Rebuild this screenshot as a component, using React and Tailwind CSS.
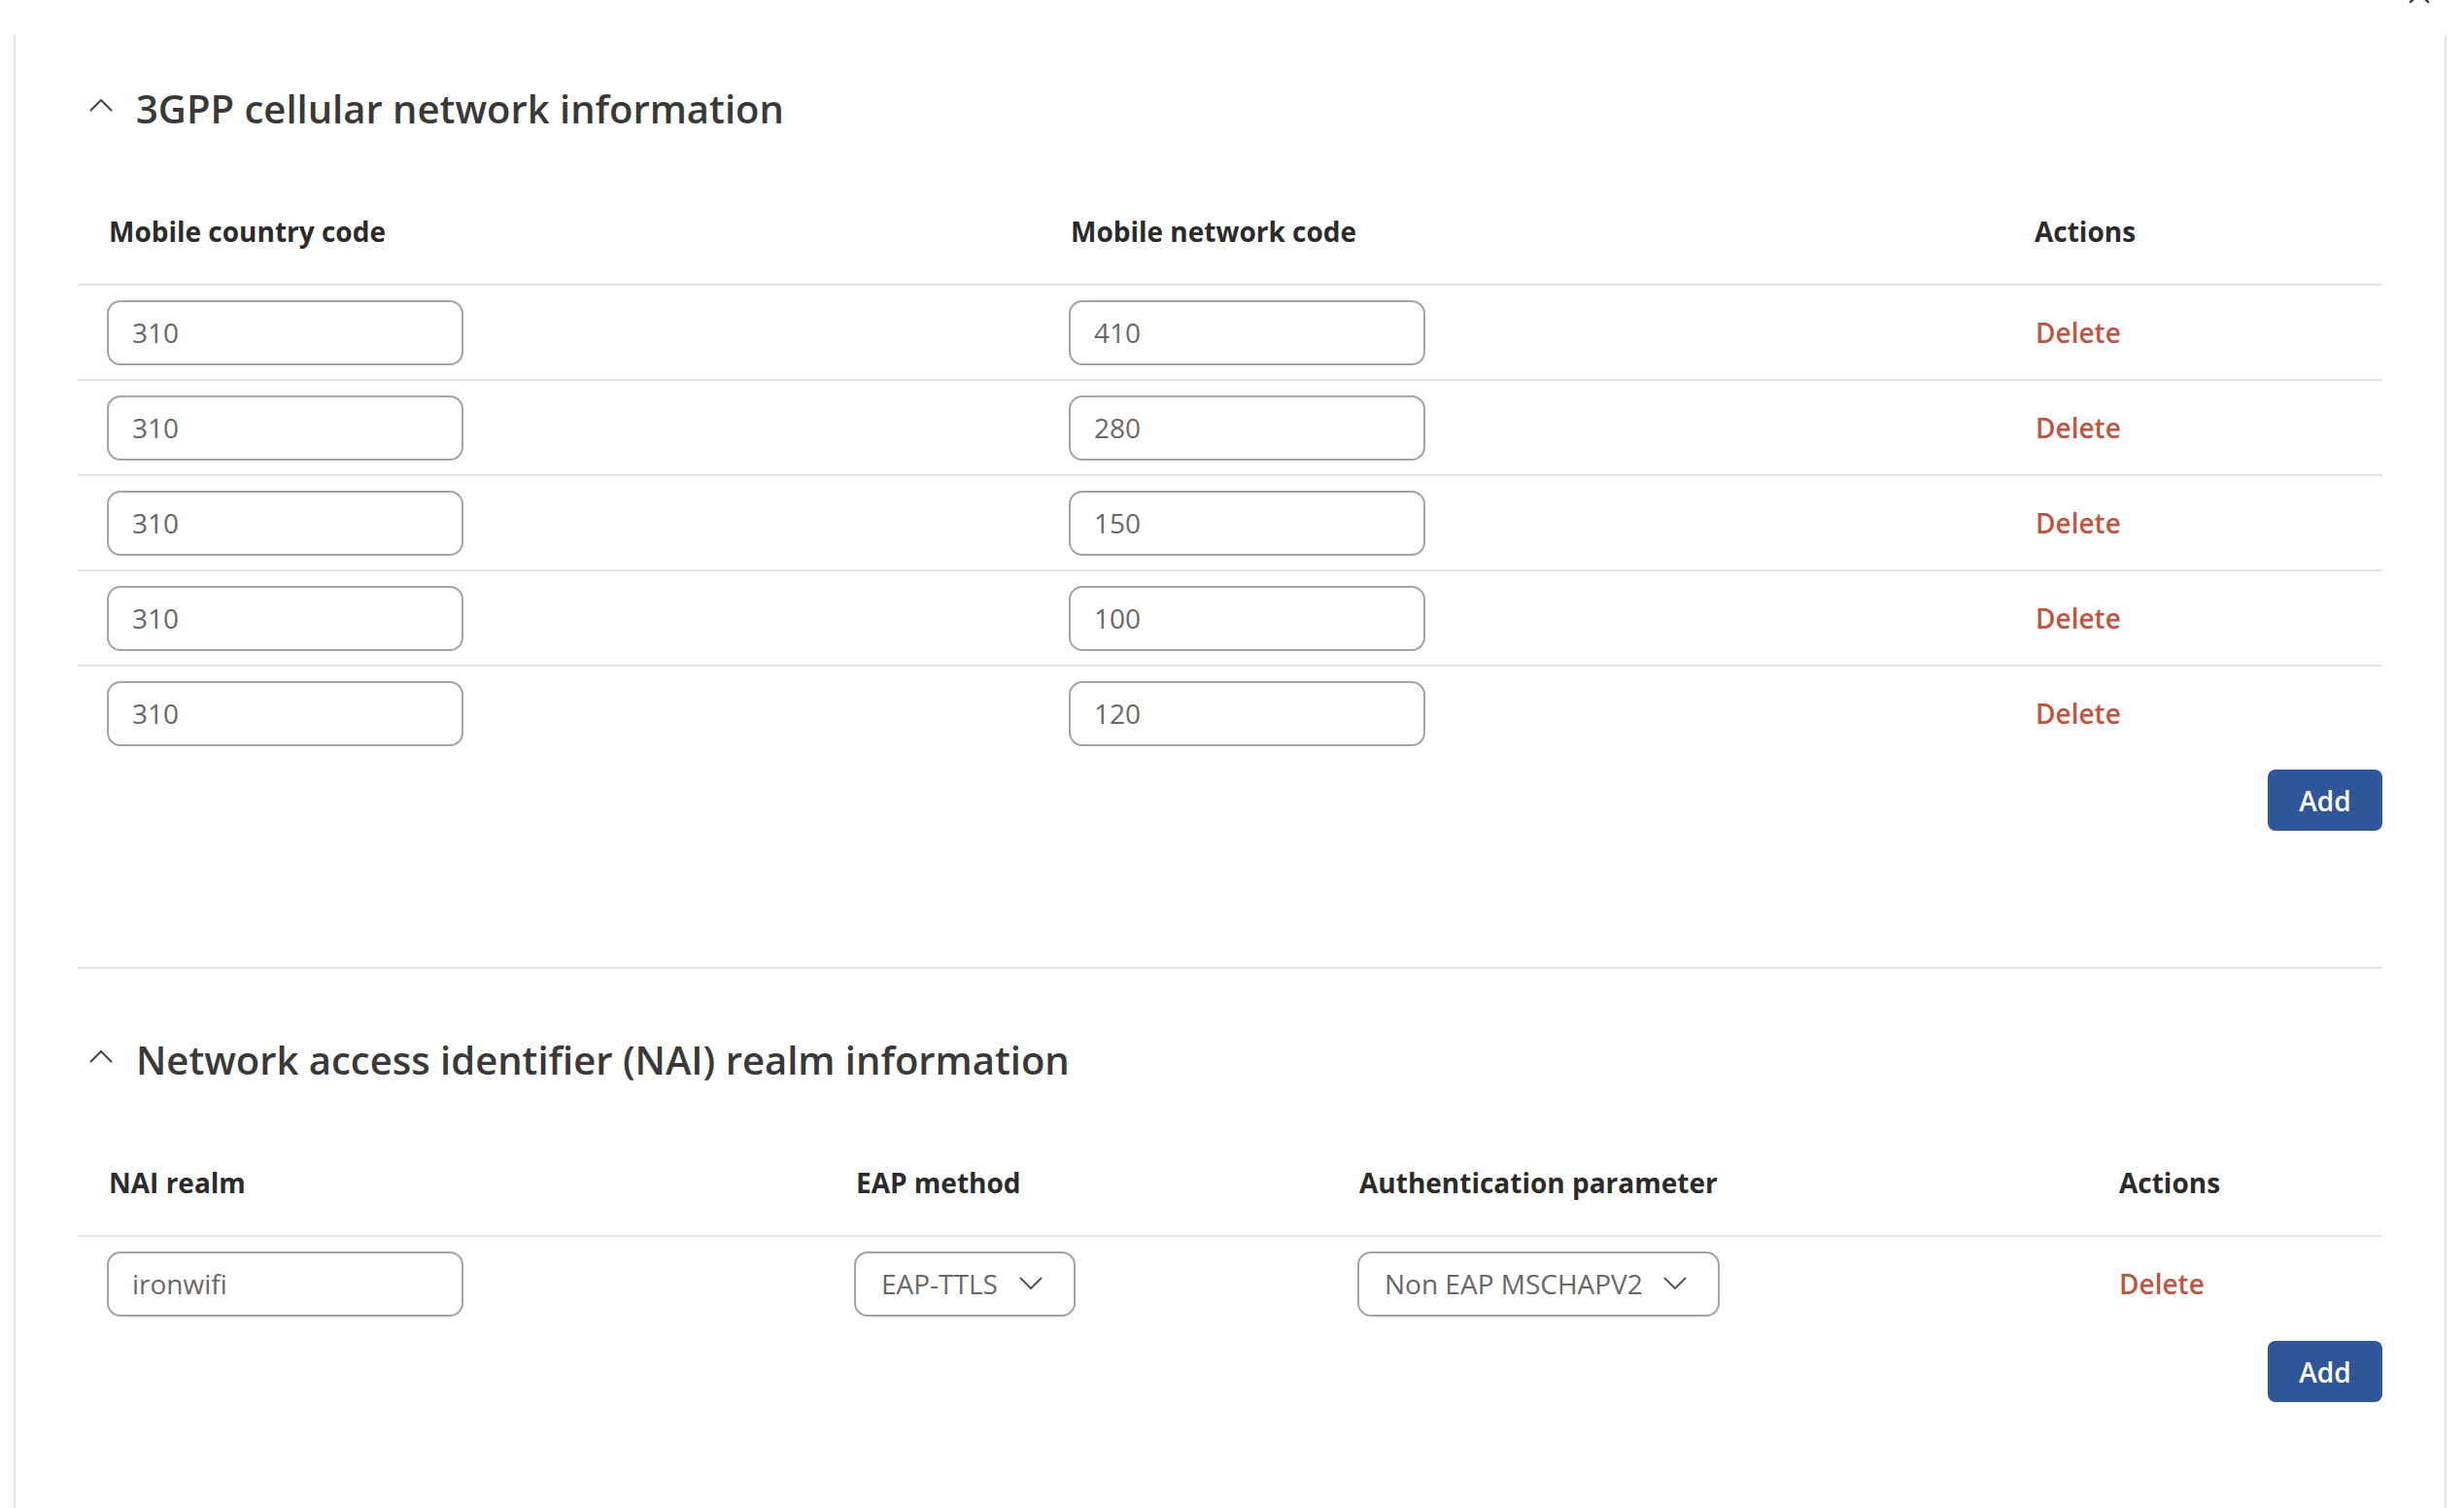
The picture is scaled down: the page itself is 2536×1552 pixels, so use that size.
import React from 'react';

const ChevronUp = ({ className }) => (
    <svg className={className} width="24" height="14" viewBox="0 0 24 14" fill="none" stroke="currentColor" strokeWidth="2" strokeLinecap="round" strokeLinejoin="round">
        <path d="M1.5 12.5 L12 2 L22.5 12.5" />
    </svg>
);

const ChevronDown = ({ className }) => (
    <svg className={className} width="24" height="14" viewBox="0 0 24 14" fill="none" stroke="currentColor" strokeWidth="2" strokeLinecap="round" strokeLinejoin="round">
        <path d="M1.5 1.5 L12 12 L22.5 1.5" />
    </svg>
);

const TextBox = ({ value }) => (
    <input
        readOnly
        value={value}
        className="w-[367px] h-[67px] rounded-[14px] border-2 border-[#a3a3a8] bg-white pl-[24px] text-[28px] text-[#686868] outline-none"
    />
);

const SelectBox = ({ value, width }) => (
    <div className={`flex items-center justify-between h-[67px] rounded-[14px] border-2 border-[#a3a3a8] bg-white pl-[26px] pr-[32px] text-[28px] text-[#686868] ${width}`}>
        <span>{value}</span>
        <ChevronDown className="text-[#555]" />
    </div>
);

const SectionTitle = ({ children }) => (
    <div className="flex items-start h-[48px]">
        <ChevronUp className="ml-[12px] mt-[13px] text-[#444]" />
        <h2 className="ml-[24px] text-[40px] leading-[48px] font-semibold text-[#393939]">{children}</h2>
    </div>
);

const DeleteLink = () => (
    <span className="text-[28px] font-semibold text-[#c2543f] cursor-pointer">Delete</span>
);

const AddButton = ({ className }) => (
    <div className={`flex justify-end ${className}`}>
        <button className="w-[118px] h-[63px] rounded-[8px] bg-[#2f5699] text-white text-[28px] font-semibold">
            Add
        </button>
    </div>
);

const App = () => {
    const plmns = [
        { mcc: "310", mnc: "410" },
        { mcc: "310", mnc: "280" },
        { mcc: "310", mnc: "150" },
        { mcc: "310", mnc: "100" },
        { mcc: "310", mnc: "120" },
    ];

    const realms = [
        { realm: "ironwifi", eap: "EAP-TTLS", auth: "Non EAP MSCHAPV2" },
    ];

    return (
        <div
            className="relative w-full h-[1552px] bg-white overflow-hidden text-[#333]"
            style={{ fontFamily: '"Open Sans", "Noto Sans", sans-serif' }}
        >
            {/* close icon, cut off at the top */}
            <svg className="absolute left-[2478px] top-[-19px] text-[#444]" width="24" height="24" viewBox="0 0 24 24" fill="none" stroke="currentColor" strokeWidth="2.5" strokeLinecap="round">
                <path d="M3 3 L21 21 M21 3 L3 21" />
            </svg>

            <div className="ml-[14px] mt-[36px] w-[2504px] h-[1516px] border-x-2 border-[#e4e4e6] px-[64px] pt-[52px]">

                {/* 3GPP */}
                <SectionTitle>3GPP cellular network information</SectionTitle>

                <div className="mt-[82px]">
                    <div className="grid grid-cols-[990px_992px_390px] border-b-2 border-[#e2e6ea] pb-[34px] text-[28px] leading-[40px] font-bold text-[#2b2b2b]">
                        <div className="pl-[32px]">Mobile country code</div>
                        <div className="pl-[32px]">Mobile network code</div>
                        <div className="pl-[32px]">Actions</div>
                    </div>

                    {plmns.map((row, i) => (
                        <div
                            key={i}
                            className={`grid grid-cols-[990px_992px_390px] items-center ${i > 0 ? 'h-[98px] border-t-2 border-[#e2e6ea]' : 'h-[96px]'}`}
                        >
                            <div className="pl-[30px]"><TextBox value={row.mcc} /></div>
                            <div className="pl-[30px]"><TextBox value={row.mnc} /></div>
                            <div className="pl-[33px]"><DeleteLink /></div>
                        </div>
                    ))}

                    <AddButton className="mt-[10px]" />
                </div>

                <div className="mt-[140px] border-t-2 border-[#e2e6ea]"></div>

                {/* NAI realm */}
                <div className="mt-[70px]">
                    <SectionTitle>Network access identifier (NAI) realm information</SectionTitle>
                </div>

                <div className="mt-[82px]">
                    <div className="grid grid-cols-[769px_518px_785px_300px] border-b-2 border-[#e2e6ea] pb-[34px] text-[28px] leading-[40px] font-bold text-[#2b2b2b]">
                        <div className="pl-[32px]">NAI realm</div>
                        <div className="pl-[32px]">EAP method</div>
                        <div className="pl-[32px]">Authentication parameter</div>
                        <div className="pl-[29px]">Actions</div>
                    </div>

                    {realms.map((row, i) => (
                        <div
                            key={i}
                            className={`grid grid-cols-[769px_518px_785px_300px] items-center ${i > 0 ? 'h-[98px] border-t-2 border-[#e2e6ea]' : 'h-[96px]'}`}
                        >
                            <div className="pl-[30px]"><TextBox value={row.realm} /></div>
                            <div className="pl-[30px]"><SelectBox value={row.eap} width="w-[228px]" /></div>
                            <div className="pl-[30px]"><SelectBox value={row.auth} width="w-[373px]" /></div>
                            <div className="pl-[29px]"><DeleteLink /></div>
                        </div>
                    ))}

                    <AddButton className="mt-[11px]" />
                </div>
            </div>
        </div>
    );
};

export default App;
